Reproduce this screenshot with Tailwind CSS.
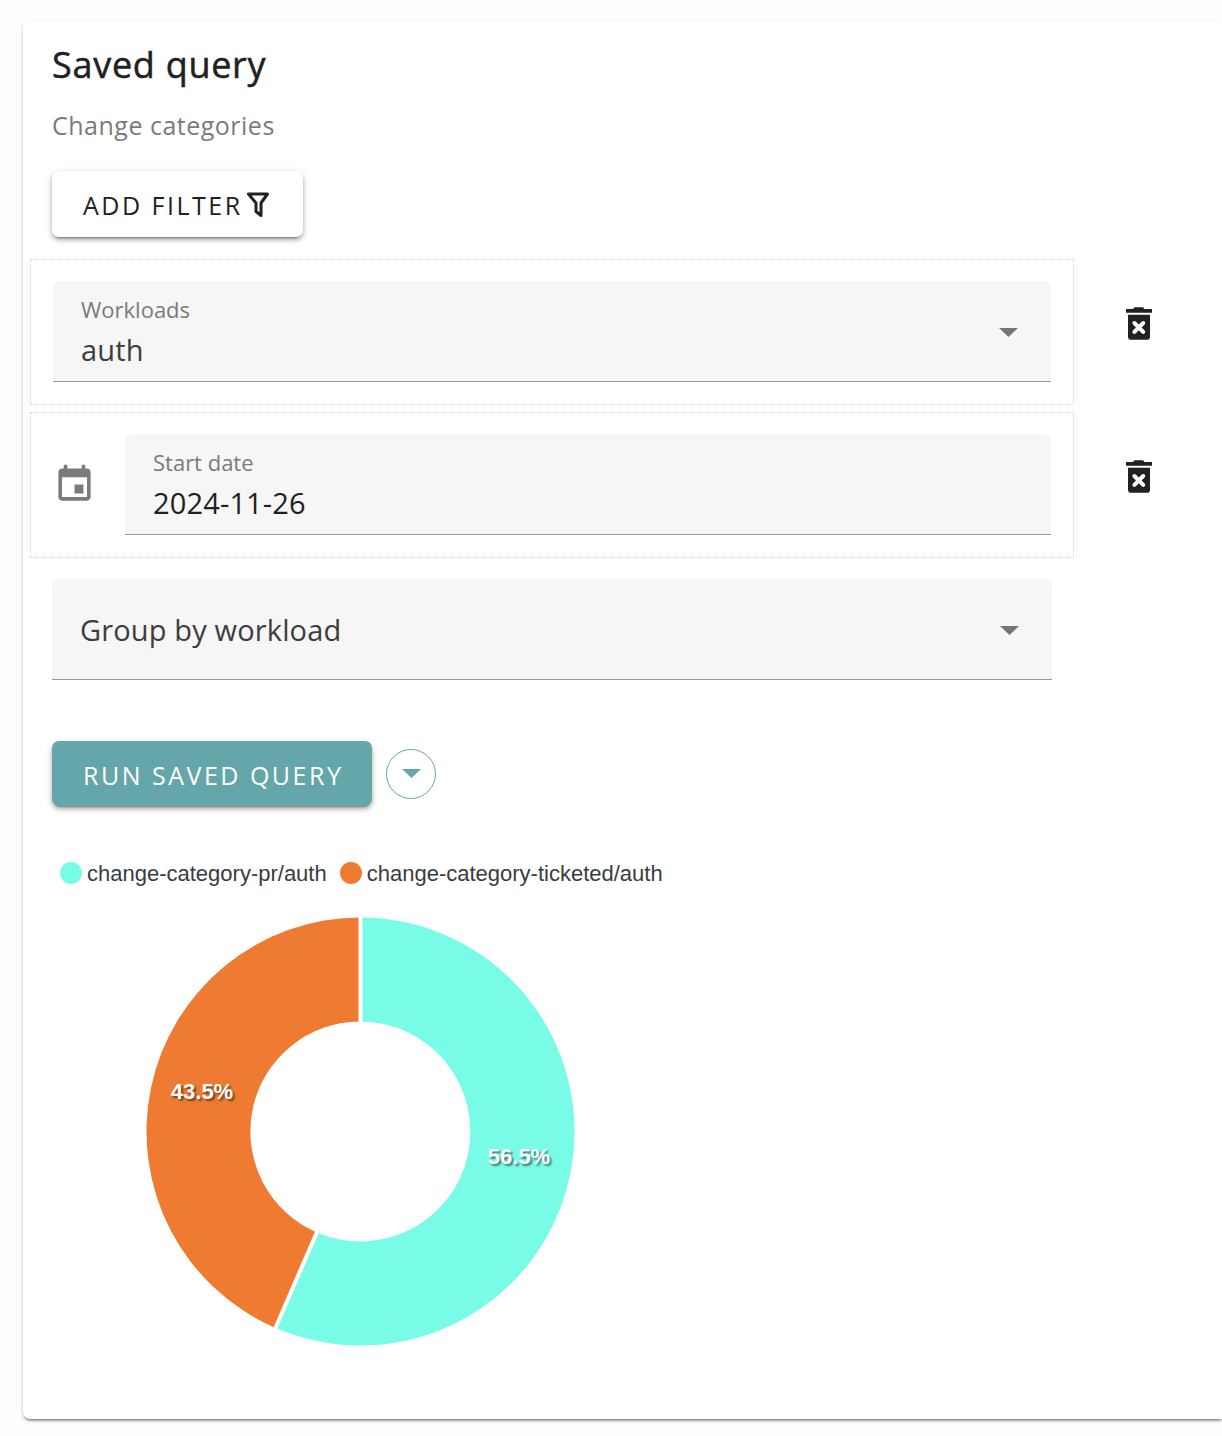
<!DOCTYPE html>
<html lang="en">
<head>
<meta charset="utf-8">
<meta name="viewport" content="width=device-width, initial-scale=1">
<title>Saved query</title>
<script src="https://cdn.jsdelivr.net/npm/@tailwindcss/browser@4"></script>
</head>
<body class="bg-[#fefefe] pt-[21px] pb-4 pl-[23px] font-['Open_Sans','Noto_Sans',sans-serif] text-[#212121] overflow-x-hidden">
<main class="rounded-l-[7px] bg-white pt-5 pr-[18px] pb-[73px] pl-[7px] shadow-[0_3px_2px_-2px_rgba(0,0,0,0.3),0_2px_2px_0_rgba(0,0,0,0.18),0_2px_5px_0_rgba(0,0,0,0.14)]">
  <header class="pl-[22px]">
    <h1 class="text-[36px] leading-[48px] font-medium tracking-[0.02em] [-webkit-text-stroke:0.5px_#212121]">Saved query</h1>
    <p class="mt-4 text-[25px] leading-10 tracking-[0.02em] text-[#7b7b7b]">Change categories</p>
    <button type="button" class="mt-[26px] flex h-[66px] items-center gap-1 rounded-[7px] bg-white pr-[34px] pl-[31px] text-[25px] font-medium tracking-widest shadow-[0_5px_2px_-4px_rgba(0,0,0,0.3),0_3px_4px_0_rgba(0,0,0,0.25),0_2px_9px_0_rgba(0,0,0,0.12)]">
      <span class="pt-1">ADD FILTER</span>
      <svg class="h-[25px] w-[22px]" viewBox="0 0 22 25" fill="none" stroke="currentColor" stroke-width="3" stroke-linejoin="round" aria-hidden="true"><path d="M1.5 2H20.5L14 11V23.5L9 19.5V11Z"/></svg>
    </button>
  </header>

  <form class="mt-[22px]">
    <div class="flex items-stretch">
      <div class="min-w-0 flex-1 border border-dotted border-[#d4d4d4] px-[22px] pt-[21px] pb-[22px]">
        <div class="relative flex h-[101px] flex-col rounded-t-[7px] border-b border-[#9a9a9a] bg-[#f6f6f6] pt-3.5">
          <label for="workloads" class="px-7 text-[22px] leading-7 text-[#7b7b7b]">Workloads</label>
          <select id="workloads" class="mt-[7px] h-10 w-full appearance-none bg-transparent px-7 text-[29px] leading-10 tracking-[0.005em] text-[#3d3d3d] outline-none"><option>auth</option></select>
          <svg class="pointer-events-none absolute top-[47px] right-[33px] h-[9px] w-[19px]" viewBox="0 0 19 9" fill="#757575" aria-hidden="true"><path d="M0 0H19L9.5 9Z"/></svg>
        </div>
      </div>
      <div class="flex w-[130px] justify-center pt-12">
        <button type="button" aria-label="Remove workload filter" class="h-[33px] w-[26px]">
          <svg class="h-[33px] w-[26px]" viewBox="0 0 26 33" aria-hidden="true"><path fill="#212121" d="M0 2H7L8.5 0.3H17L18.5 2H26V5.7H0ZM2 7.7H24V29.7Q24 32.8 21 32.8H5Q2 32.8 2 29.7Z"/><path d="M8.4 16L17.2 24.8M17.2 16L8.4 24.8" stroke="#fff" stroke-width="4" stroke-linecap="round"/></svg>
        </button>
      </div>
    </div>

    <div class="mt-[7px] flex items-stretch">
      <div class="flex min-w-0 flex-1 items-center gap-[29px] border border-dotted border-[#d4d4d4] px-[22px] pt-[21px] pb-[22px]">
        <svg class="h-[43px] w-[43px] shrink-0" viewBox="0 0 24 24" fill="#7b7b7b" aria-hidden="true"><path d="M17 12h-5v5h5v-5zM16 1v2H8V1H6v2H5c-1.11 0-1.99.9-1.99 2L3 19c0 1.1.89 2 2 2h14c1.1 0 2-.9 2-2V5c0-1.1-.9-2-2-2h-1V1h-2zm3 18H5V8h14v11z"/></svg>
        <div class="flex h-[101px] min-w-0 flex-1 flex-col rounded-t-[7px] border-b border-[#9a9a9a] bg-[#f6f6f6] pt-3.5">
          <label for="start" class="px-7 text-[22px] leading-7 text-[#7b7b7b]">Start date</label>
          <input id="start" type="text" value="2024-11-26" class="mt-[7px] h-10 w-full bg-transparent px-7 text-[29px] leading-10 tracking-[0.005em] outline-none">
        </div>
      </div>
      <div class="flex w-[130px] justify-center pt-12">
        <button type="button" aria-label="Remove start date filter" class="h-[33px] w-[26px]">
          <svg class="h-[33px] w-[26px]" viewBox="0 0 26 33" aria-hidden="true"><path fill="#212121" d="M0 2H7L8.5 0.3H17L18.5 2H26V5.7H0ZM2 7.7H24V29.7Q24 32.8 21 32.8H5Q2 32.8 2 29.7Z"/><path d="M8.4 16L17.2 24.8M17.2 16L8.4 24.8" stroke="#fff" stroke-width="4" stroke-linecap="round"/></svg>
        </button>
      </div>
    </div>

    <div class="relative mt-[21px] mr-[152px] ml-[22px] h-[101px] rounded-t-[7px] border-b border-[#9a9a9a] bg-[#f6f6f6]">
      <select aria-label="Group by" class="h-full w-full appearance-none bg-transparent px-7 pt-0.5 text-[29px] tracking-[0.005em] text-[#3d3d3d] outline-none"><option>Group by workload</option></select>
      <svg class="pointer-events-none absolute top-[47px] right-[33px] h-[9px] w-[19px]" viewBox="0 0 19 9" fill="#757575" aria-hidden="true"><path d="M0 0H19L9.5 9Z"/></svg>
    </div>

    <div class="mt-[61px] ml-[22px] flex items-center gap-3.5">
      <button type="submit" class="h-[65px] rounded-[7px] bg-[#65a6ab] pt-1 pr-[29px] pl-[31px] text-[25px] font-medium tracking-widest text-white shadow-[0_5px_2px_-4px_rgba(0,0,0,0.3),0_3px_4px_0_rgba(0,0,0,0.25),0_2px_9px_0_rgba(0,0,0,0.12)]">RUN SAVED QUERY</button>
      <button type="button" aria-label="More run options" class="flex h-[50px] w-[50px] items-center justify-center rounded-full border border-[#65a6ab]">
        <svg class="h-[9px] w-[19px]" viewBox="0 0 19 9" fill="#65a6ab" aria-hidden="true"><path d="M0 0H19L9.5 9Z"/></svg>
      </button>
    </div>
  </form>

  <section aria-label="Change categories chart" class="mt-[52px] ml-[30px] font-['Liberation_Sans',Arial,sans-serif]">
    <ul class="flex gap-[13px] text-[22px] leading-7 text-[#373d3f]">
      <li class="flex items-center gap-[5px]"><span class="h-[22px] w-[22px] rounded-full bg-[#78fce8]"></span><span class="pt-0.5">change-category-pr/auth</span></li>
      <li class="flex items-center gap-[5px]"><span class="h-[22px] w-[22px] rounded-full bg-[#ee7b31]"></span><span class="pt-0.5">change-category-ticketed/auth</span></li>
    </ul>
    <svg class="mt-[29px] ml-[86px] h-[429px] w-[429px]" viewBox="0 0 429 429" role="img" aria-label="56.5% pr, 43.5% ticketed">
      <path fill="#78fce8" d="M214.5 0.5A214 214 0 1 1 129.5 410.9L170.8 315.5A110 110 0 1 0 214.5 104.5Z"/>
      <path fill="#ee7b31" d="M214.5 0.5A214 214 0 0 0 129.5 410.9L170.8 315.5A110 110 0 0 1 214.5 104.5Z"/>
      <path stroke="#fff" stroke-width="4" d="M214.5 0V106M128.7 412.7L171.6 313.6"/>
      <g class="text-[22px] font-bold [text-shadow:2px_2px_2px_rgba(0,0,0,0.5)]" fill="#fff" text-anchor="middle">
        <text x="373" y="247">56.5%</text>
        <text x="56" y="182">43.5%</text>
      </g>
    </svg>
  </section>
</main>
</body>
</html>
